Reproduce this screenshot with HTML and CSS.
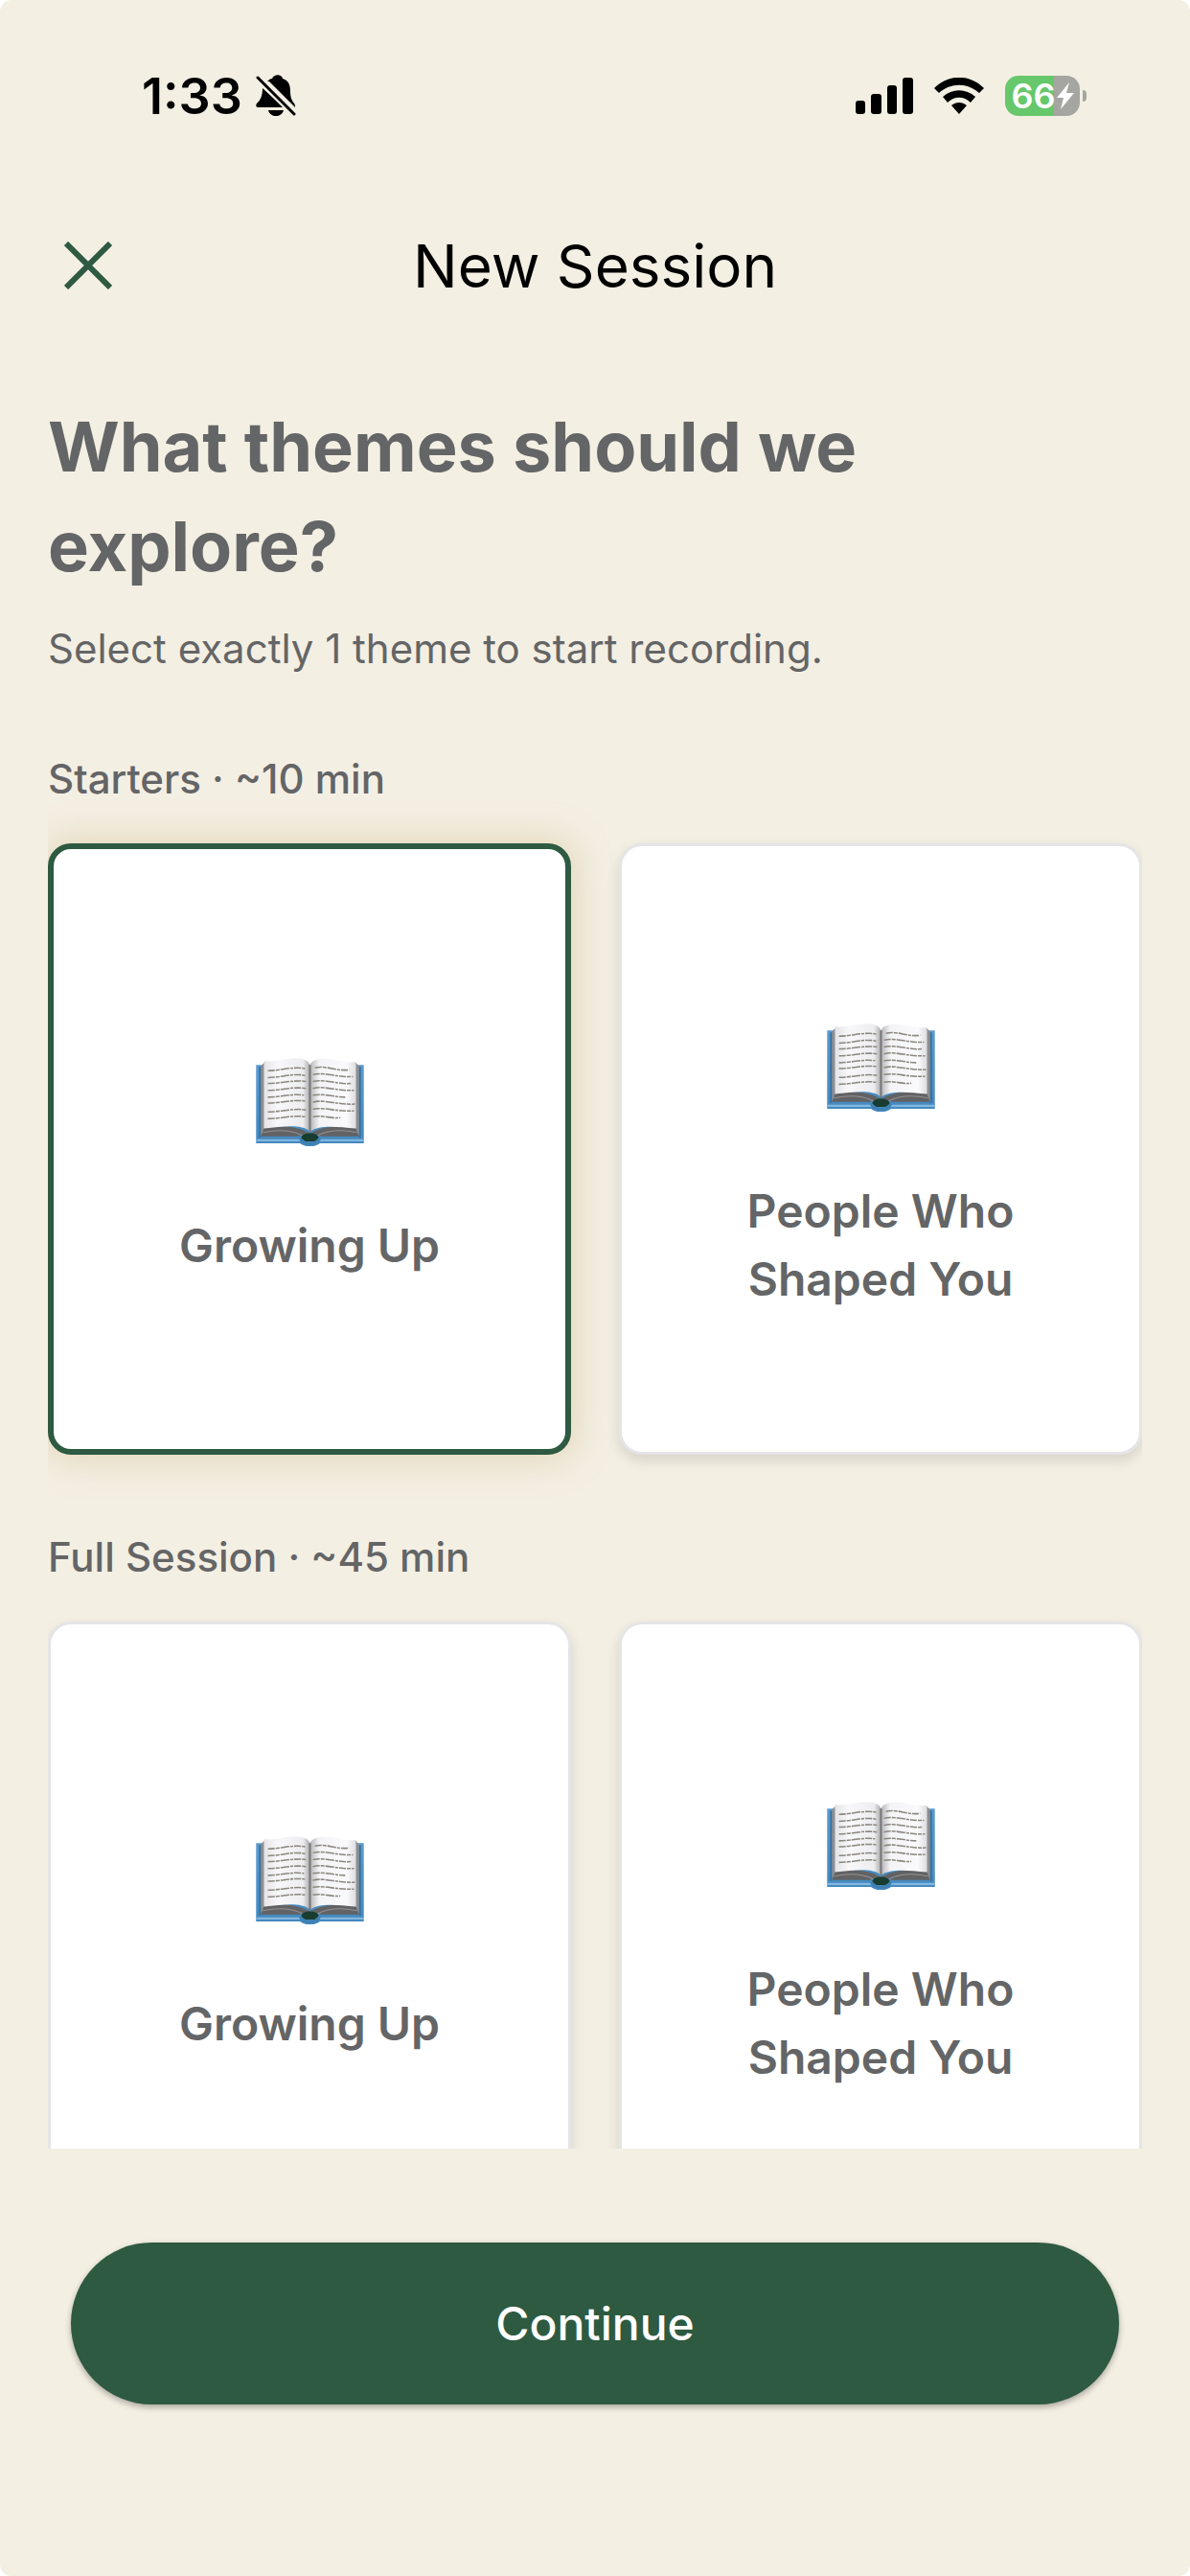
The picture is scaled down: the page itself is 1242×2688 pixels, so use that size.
FILE: index.html
```html
<!DOCTYPE html>
<html lang="en">
<head>
  <meta charset="utf-8">
  <meta name="viewport" content="width=device-width, initial-scale=1">
  <title>New Session</title>
  <link rel="stylesheet" href="styles.css">
</head>
<body>
  <!-- shared book drawing, reused by every card -->
  <svg class="defs" width="0" height="0" aria-hidden="true">
    <defs>
      <linearGradient id="pageLeft" x1="0" x2="1" y1="0" y2="0">
        <stop offset="0" stop-color="#e4e4e6"/>
        <stop offset="0.3" stop-color="#f8f8fa"/>
        <stop offset="0.85" stop-color="#ededf0"/>
        <stop offset="1" stop-color="#a9a9ab"/>
      </linearGradient>
      <linearGradient id="pageRight" x1="0" x2="1" y1="0" y2="0">
        <stop offset="0" stop-color="#b5b5b7"/>
        <stop offset="0.2" stop-color="#f4f4f6"/>
        <stop offset="0.8" stop-color="#fafafc"/>
        <stop offset="1" stop-color="#dddde0"/>
      </linearGradient>
      <linearGradient id="cover" x1="0" x2="0" y1="0" y2="1">
        <stop offset="0" stop-color="#5b9bd0"/>
        <stop offset="1" stop-color="#4388be"/>
      </linearGradient>
      <symbol id="book" viewBox="0 0 112 90">
        <path fill="url(#cover)" d="M1 7h110v80H66c-3 4-17 4-20 0H1z"/>
        <path fill="#3a709c" d="M4 9h2v72H4zM106 9h2v72h-2z"/>
        <path fill="#82b7df" d="M1 83h45v2H1zM66 83h45v2H66z"/>
        <path fill="#8e8e90" d="M6 8l4-4v69L6 80zM106 8l-4-4v69l4 7z"/>
        <path fill="#626264" d="M9 72c16-4 34-2 43 3l4 2 4-2c9-5 27-7 43-3l3 8H67c-4-3-18-3-22 0H6z"/>
        <path fill="none" stroke="#929294" d="M8 76c15-3 30-2 40 3M104 76c-15-3-30-2-40 3"/>
        <path fill="url(#pageLeft)" d="M9 3C22 5 35-2 48 1c4 1 7 3 8 6v68c-9-8-27-5-47-3z"/>
        <path fill="url(#pageRight)" d="M56 7c1-3 5-5 9-6 12-2 23 4 38 3v68c-20-2-37-4-47 3z"/>
        <path fill="none" stroke="#77777a" stroke-width="2" d="M56 7v69"/>
        <path fill="#183d30" d="M47 82c0-7 18-7 18 0l-4 3H51z"/>
        <path fill="none" stroke="#3f80b3" stroke-width="3" d="M46 82c3 7 17 7 20 0"/>
        <g fill="none" stroke="#8b877f" stroke-width="1.5" stroke-dasharray="7 1 4 1 9 1 3 1">
          <path d="M13 13c13 0 27-5 38-2M13 20c13 0 27-5 38-2M13 26c13 0 27-4 39-2M13 33c13 0 27-4 39-2M13 40c13 0 25-4 37-2M13 46c13 0 27-4 38-2M13 55c13 0 27-4 39-2M13 62c13 0 27-4 38-2"/>
          <path d="M61 10c11-3 22 4 35 2M59 17c12-3 24 3 41 2M59 24c12-3 24 3 39 2M59 31c12-3 25 3 42 2M59 38c12-2 22 2 33 2M59 45c12-3 25 3 43 2M59 52c12-2 25 3 42 2M59 60c10-2 18 2 28 1"/>
        </g>
      </symbol>
    </defs>
  </svg>

  <div class="app">
    <div class="status-bar">
      <div class="status-group">
        <span class="time">1:33</span>
        <svg width="42" height="46" viewBox="0 0 42 46" aria-label="Silent mode">
          <path d="M12 8c2-2 3-3 5-3C19 0 27 0 28 5c7 2 8 8 8 14 0 6 2 9 4 12 1 1 1 2 1 4L14 8z"/>
          <path d="M7 15l22 20H2c-2 0-2-3-1-4 4-4 6-8 6-16zM13 38h16c-2 8-14 8-16 0z"/>
          <path fill="none" stroke="#f4efe3" stroke-width="7" d="M2 4l38 38"/>
          <path fill="none" stroke="#000" stroke-width="3" stroke-linecap="round" d="M2 4l38 38"/>
        </svg>
      </div>
      <div class="status-group status-icons">
        <svg width="60" height="38" viewBox="0 0 60 38" aria-label="Signal">
          <rect x="0" y="24" width="10" height="14" rx="3"/>
          <rect x="16" y="17" width="11" height="21" rx="3"/>
          <rect x="33" y="8" width="10" height="30" rx="3"/>
          <rect x="49" y="0" width="11" height="38" rx="3"/>
        </svg>
        <svg width="52" height="38" viewBox="0 0 52 38" aria-label="Wi-Fi">
          <path d="M0 11C15-4 37-4 52 11l-5 5C35 5 17 5 5 16zM9 20c10-9 24-9 34 0l-5 6c-7-7-17-7-24 0zM18 29c5-4 11-4 16 0l-8 9z"/>
        </svg>
        <div class="battery">
          <div class="battery-body">
            <span>66</span>
            <svg width="18" height="28" viewBox="0 0 18 28"><path fill="#fff" d="M13 0L0 16h7L4 28 18 11h-8z"/></svg>
          </div>
          <div class="battery-tip"></div>
        </div>
      </div>
    </div>

    <header class="header">
      <button class="close" aria-label="Close">
        <svg width="50" height="50" viewBox="0 0 50 50"><path d="M2 2l46 46M48 2L2 48"/></svg>
      </button>
      <h1>New Session</h1>
    </header>

    <main class="content">
      <h2>What themes should we explore?</h2>
      <p class="hint">Select exactly 1 theme to start recording.</p>

      <section>
        <h3>Starters · ~10 min</h3>
        <div class="cards">
          <button class="card selected" aria-pressed="true">
            <svg class="book"><use href="#book"/></svg>
            <span>Growing Up</span>
          </button>
          <button class="card" aria-pressed="false">
            <svg class="book"><use href="#book"/></svg>
            <span>People Who Shaped You</span>
          </button>
        </div>
      </section>

      <section>
        <h3>Full Session · ~45 min</h3>
        <div class="cards">
          <button class="card" aria-pressed="false">
            <svg class="book"><use href="#book"/></svg>
            <span>Growing Up</span>
          </button>
          <button class="card" aria-pressed="false">
            <svg class="book"><use href="#book"/></svg>
            <span>People Who Shaped You</span>
          </button>
        </div>
      </section>
    </main>

    <footer class="footer">
      <button class="continue">Continue</button>
    </footer>
  </div>
</body>
</html>
```

FILE: styles.css
```css
* {
  box-sizing: border-box;
}
body {
  margin: 0;
  background-color: #fff;
  font-family: Inter, "Liberation Sans", sans-serif;
  color: #646566;
}
h1, h2, h3, p {
  margin: 0;
}
button {
  font-family: inherit;
  color: inherit;
  border: none;
  cursor: pointer;
}
.defs {
  position: absolute;
}
.app {
  display: flex;
  flex-direction: column;
  height: 100vh;
  background-color: #f4efe3;
  border-radius: 12px;
  overflow: hidden;
}

/* status bar */
.status-bar {
  display: flex;
  justify-content: space-between;
  align-items: center;
  height: 200px;
  padding: 0 108px 0 148px;
  color: #000;
}
.status-group {
  display: flex;
  align-items: center;
  gap: 14px;
}
.status-icons {
  gap: 22px;
}
.time {
  font-size: 52px;
  font-weight: 600;
}
.battery {
  display: flex;
  align-items: center;
  gap: 3px;
}
.battery-body {
  display: flex;
  align-items: center;
  justify-content: center;
  gap: 1px;
  width: 78px;
  height: 42px;
  border-radius: 14px;
  background: linear-gradient(to right, #67c76b 66%, #a5a6a1 66%);
  color: #fff;
  font-size: 36px;
  font-weight: 600;
}
.battery-tip {
  width: 4px;
  height: 12px;
  border-radius: 0 4px 4px 0;
  background-color: #a5a6a1;
}

/* title row */
.header {
  display: grid;
  grid-template-columns: 84px 1fr 84px;
  align-items: center;
  height: 154px;
  padding: 0 50px;
}
.header h1 {
  color: #000;
  font-size: 62px;
  font-weight: 400;
  text-align: center;
}
.close {
  display: flex;
  justify-content: center;
  padding: 0;
  background: none;
}
.close path {
  stroke: #2d5a41;
  stroke-width: 6;
}

/* scrolling part */
.content {
  flex: 1;
  min-height: 0;
  margin: 0 50px;
  padding-top: 60px;
  overflow-y: auto;
  scrollbar-width: none;
}
.content h2 {
  margin-bottom: 24px;
  font-size: 72px;
  font-weight: 700;
  line-height: 104px;
}
.hint {
  margin-bottom: 74px;
  font-size: 42px;
  line-height: 62px;
}
.content h3 {
  margin-bottom: 36px;
  font-size: 42px;
  font-weight: 500;
  line-height: 62px;
}
section {
  margin-bottom: 76px;
}
.cards {
  display: grid;
  grid-template-columns: 1fr 1fr;
  gap: 50px;
}
.card {
  display: flex;
  flex-direction: column;
  align-items: center;
  justify-content: center;
  gap: 68px;
  height: 638px;
  padding: 0 96px;
  background-color: #fff;
  border: 3px solid #e5e5e7;
  border-radius: 24px;
  box-shadow: 0 6px 14px rgba(0, 0, 0, 0.12);
  font-size: 48px;
  font-weight: 600;
  line-height: 71px;
}
.card.selected {
  border: 6px solid #2d5a41;
  box-shadow: 0 0 36px 6px rgba(199, 175, 118, 0.35);
}
.book {
  width: 115px;
  height: 92px;
  margin-top: 40px;
}

/* bottom action */
.footer {
  height: 446px;
  padding: 98px 74px 0;
}
.continue {
  width: 100%;
  height: 169px;
  border-radius: 85px;
  background-color: #2d5a41;
  box-shadow: 0 3px 6px rgba(0, 0, 0, 0.3);
  color: #fff;
  font-size: 48px;
  font-weight: 500;
}
```
